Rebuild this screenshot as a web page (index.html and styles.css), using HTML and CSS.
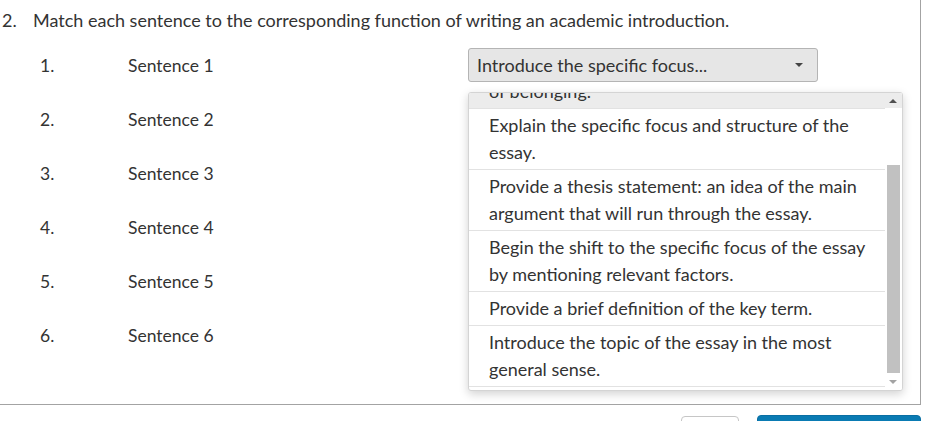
FILE: index.html
```html
<!DOCTYPE html>
<html>
<head>
<meta charset="utf-8">
<link rel="stylesheet" href="styles.css">
</head>
<body>
<div class="card">
  <div class="question">
    <span class="qnum">2.</span>
    <span class="qtext">Match each sentence to the corresponding function of writing an academic introduction.</span>
  </div>
  <div class="rows">
    <div class="row">
      <span class="num">1.</span><span class="label">Sentence 1</span>
      <div class="select"><span class="select-text">Introduce the specific focus...</span><span class="caret"></span></div>
    </div>
    <div class="row"><span class="num">2.</span><span class="label">Sentence 2</span></div>
    <div class="row"><span class="num">3.</span><span class="label">Sentence 3</span></div>
    <div class="row"><span class="num">4.</span><span class="label">Sentence 4</span></div>
    <div class="row"><span class="num">5.</span><span class="label">Sentence 5</span></div>
    <div class="row"><span class="num">6.</span><span class="label">Sentence 6</span></div>
  </div>
  <div class="dropdown">
    <ul class="options">
      <li class="option hover">Highlight the importance of a shared sense of&nbsp;belonging.</li>
      <li class="option">Explain the specific focus and structure of the essay.</li>
      <li class="option">Provide a thesis statement: an idea of the main argument that will run through the essay.</li>
      <li class="option">Begin the shift to the specific focus of the essay by mentioning relevant factors.</li>
      <li class="option">Provide a brief definition of the key term.</li>
      <li class="option">Introduce the topic of the essay in the most general sense.</li>
      <li class="option">Introduce the specific focus...</li>
    </ul>
    <div class="scrollbar">
      <span class="scroll-btn top"><span class="arrow up"></span></span>
      <span class="thumb"></span>
      <span class="arrow down"></span>
    </div>
  </div>
</div>
<div class="actions">
  <button class="btn btn-secondary"></button>
  <button class="btn btn-primary"></button>
</div>
</body>
</html>
```
FILE: styles.css
```css
html, body {
  margin: 0;
  padding: 0;
  background: #fff;
}
body {
  font-family: "Source Sans Pro", Lato, "Liberation Sans", sans-serif;
  font-size: 17.5px;
  color: #333;
  width: 934px;
  height: 421px;
  overflow: hidden;
}
.card {
  position: relative;
  width: 920px;
  height: 404px;
  border-right: 1px solid #a3a3a3;
  border-bottom: 1px solid #a3a3a3;
}
.question {
  display: flex;
  padding: 8px 0 0 2px;
  font-size: 18px;
  line-height: 24px;
}
.qnum {
  width: 31px;
}
.rows {
  display: flex;
  flex-direction: column;
  padding-top: 16px;
}
.row {
  display: flex;
  align-items: flex-start;
  height: 54px;
  line-height: 36px;
}
.num {
  width: 88px;
  padding-left: 40px;
}
.label {
  width: 340px;
}
.select {
  display: flex;
  align-items: center;
  justify-content: space-between;
  box-sizing: border-box;
  width: 350px;
  height: 34px;
  padding: 0 14px 0 8px;
  background: #e6e6e6;
  border: 1px solid #b4b4b4;
  border-radius: 3px;
  font-size: 18px;
}
.caret {
  width: 0;
  height: 0;
  border-left: 4px solid transparent;
  border-right: 4px solid transparent;
  border-top: 4px solid #444;
}
.dropdown {
  position: absolute;
  left: 468px;
  top: 92px;
  width: 435px;
  height: 299px;
  box-sizing: border-box;
  background: #fff;
  border: 1px solid #d4d4d4;
  border-radius: 3px;
  box-shadow: 0 3px 10px rgba(0, 0, 0, 0.18);
  overflow: hidden;
}
.options {
  list-style: none;
  margin: -45px 0 0 0;
  padding: 0;
  width: 417px;
}
.option {
  padding: 3px 10px 3px 20px;
  line-height: 27px;
  font-size: 18px;
  border-bottom: 1px solid #e2e2e2;
}
.option.hover {
  background: #ececec;
}
.scrollbar {
  position: absolute;
  top: 0;
  right: 0;
  width: 17px;
  height: 100%;
  background: #fff;
}
.scroll-btn.top {
  position: absolute;
  top: 0;
  left: 0;
  width: 100%;
  height: 15px;
  background: #ececec;
}
.arrow {
  position: absolute;
  left: 4px;
  width: 0;
  height: 0;
  border-left: 4px solid transparent;
  border-right: 4px solid transparent;
}
.arrow.up {
  top: 6px;
  border-bottom: 4px solid #505050;
}
.arrow.down {
  bottom: 6px;
  border-top: 4px solid #a3a3a3;
}
.thumb {
  position: absolute;
  top: 72px;
  left: 2px;
  width: 13px;
  height: 208px;
  background: #c1c1c1;
}
.actions {
  display: flex;
  justify-content: flex-end;
  gap: 18px;
  padding-top: 10px;
  width: 921px;
}
.btn {
  height: 30px;
  border-radius: 4px;
  padding: 0;
  font-family: inherit;
}
.btn-secondary {
  width: 58px;
  margin-top: 1px;
  background: #fff;
  border: 1px solid #c6c6c6;
}
.btn-primary {
  width: 164px;
  background: #0a7bb3;
  border: 1px solid #0a6fa3;
}
```
